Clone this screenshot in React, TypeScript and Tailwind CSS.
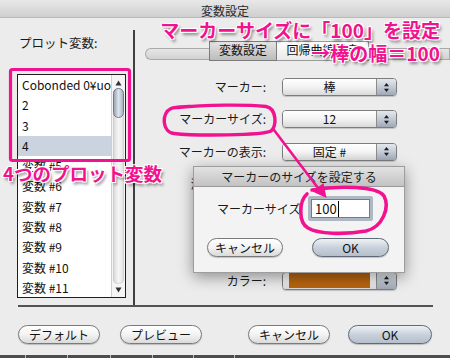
import React from 'react';

const jp = "font-['Noto_Sans_CJK_JP','Noto_Sans',sans-serif]";

const plotVars = [
  'Cobonded 0¥uo ’',
  '2',
  '3',
  '4',
  '変数 #5',
  '変数 #6',
  '変数 #7',
  '変数 #8',
  '変数 #9',
  '変数 #10',
  '変数 #11',
];

function StepArrows() {
  return (
    <svg width="7" height="11" viewBox="0 0 7 11">
      <path d="M3.5 1 L6 4.2 L1 4.2 Z" fill="#1b1b1b" />
      <path d="M3.5 10 L6 6.8 L1 6.8 Z" fill="#1b1b1b" />
    </svg>
  );
}

function Popup({ children, swatch = false }: { children?: React.ReactNode; swatch?: boolean }) {
  return (
    <div className="flex h-[18px] w-[115px] overflow-hidden rounded-[4px] border border-[#7d7d7d] shadow-[0_1px_1px_rgba(0,0,0,0.18)]">
      <div className="flex flex-1 items-center justify-center bg-linear-to-b from-white via-[#f3f3f3] to-[#d9d9d9] text-[12px] leading-none text-[#111]">
        {swatch ? <div className="mx-[6px] h-[15px] flex-1 bg-[#b7640f]" /> : children}
      </div>
      <div className="flex w-[20px] items-center justify-center border-l border-[#8b8b8b] bg-linear-to-b from-[#e3e8ee] via-[#c3cbd5] to-[#9fa9b6]">
        <StepArrows />
      </div>
    </div>
  );
}

function AquaButton({
  children,
  primary = false,
  className = '',
}: {
  children: React.ReactNode;
  primary?: boolean;
  className?: string;
}) {
  const skin = primary
    ? 'border-[#5f6a78] bg-linear-to-b from-[#eef2f6] via-[#c9d1db] to-[#b5bfcb]'
    : 'border-[#7a7a7a] bg-linear-to-b from-white via-[#f3f3f3] to-[#dadada]';
  return (
    <div
      className={`flex h-[19px] items-center justify-center rounded-full border text-[12px] leading-none text-[#111] shadow-[0_1px_1px_rgba(0,0,0,0.2)] ${skin} ${className}`}
    >
      {children}
    </div>
  );
}

export default function App() {
  return (
    <div className={`relative flex h-[358px] w-[450px] flex-col overflow-hidden bg-[#ececec] ${jp}`}>
      {/* window title */}
      <div className="flex h-[18px] shrink-0 justify-center border-b border-[#b9b9b9] bg-linear-to-b from-[#e8e8e8] to-[#cfcfcf] pt-[4px] text-[12px] leading-[14px] text-[#2a2a2a]">
        変数設定
      </div>

      {/* body */}
      <div className="flex h-[287px] shrink-0">
        {/* left: plot variables */}
        <div className="flex w-[133px] shrink-0 flex-col">
          <div className="ml-[19px] mt-[17px] text-[12.5px] leading-[16px] text-[#1a1a1a]">プロット変数:</div>
          <div className="ml-[17px] mt-[23px] flex h-[224px] w-[109px] border border-[#1e1e1e] bg-white">
            <div className="flex-1 overflow-hidden">
              {plotVars.map((v, i) => (
                <div
                  key={v}
                  className={`h-[20.3px] whitespace-nowrap pl-[4px] text-[12px] leading-[20.3px] text-[#111] ${
                    i === 3 ? 'bg-[#cbd3de]' : ''
                  }`}
                >
                  {v}
                </div>
              ))}
            </div>
            <div className="flex w-[14px] flex-col items-center border-l border-[#cfcfcf] bg-[#f5f5f5]">
              <svg width="7" height="6" viewBox="0 0 7 6" className="mt-[5px]">
                <path d="M3.5 0.5 L6.5 5.5 L0.5 5.5 Z" fill="#333" />
              </svg>
              <div className="mt-[2px] flex w-[11px] flex-1 flex-col rounded-full bg-linear-to-r from-[#d9d9d9] via-[#f6f6f6] to-[#e2e2e2] shadow-[inset_0_0_2px_rgba(0,0,0,0.25)]">
                <div className="h-[30px] rounded-full border border-[#6f7b8a] bg-linear-to-r from-[#9aa6b5] via-[#dfe5ec] to-[#a7b2c0]" />
              </div>
              <svg width="7" height="6" viewBox="0 0 7 6" className="mb-[4px] mt-[3px]">
                <path d="M3.5 5.5 L6.5 0.5 L0.5 0.5 Z" fill="#333" />
              </svg>
            </div>
          </div>
        </div>

        {/* vertical divider */}
        <div className="mt-[12px] w-[2px] shrink-0 bg-[#3f3f3f]" />

        {/* right: settings */}
        <div className="flex flex-1 flex-col">
          <div className="ml-[10px] mt-[23px] flex h-[20px] items-start">
            <div className="mt-[7px] h-[12px] w-[64px] rounded-l-[6px] border border-r-0 border-[#a9a9a9] bg-linear-to-b from-[#e6e6e6] to-[#d2d2d2]" />
            <div className="flex h-[20px] w-[68px] items-center justify-center border border-[#7b7b7b] bg-linear-to-b from-[#e4e4e4] via-[#cfcfcf] to-[#bcbcbc] pb-[3px] text-[12px] leading-none text-[#111]">
              変数設定
            </div>
            <div className="flex h-[20px] w-[92px] items-center justify-center border border-l-0 border-[#9a9a9a] bg-linear-to-b from-white to-[#e9e9e9] pb-[3px] text-[12px] leading-none text-[#111]">
              回帰曲線設定
            </div>
            <div className="mt-[7px] h-[12px] flex-1 border border-l-0 border-[#a9a9a9] bg-linear-to-b from-[#e6e6e6] to-[#d2d2d2]" />
          </div>

          <div className="mt-[17px] grid grid-cols-[131px_115px] gap-x-[16px] gap-y-[14.33px] text-[12px] leading-[18px] text-[#1a1a1a]">
            <div className="text-right">マーカー:</div>
            <Popup>棒</Popup>
            <div className="text-right">マーカーサイズ:</div>
            <Popup>12</Popup>
            <div className="text-right">マーカーの表示:</div>
            <Popup>固定 #</Popup>
            <div className="whitespace-nowrap text-right">濃淡スタイル:</div>
            <Popup>実線</Popup>
            <div className="text-right">線の幅:</div>
            <Popup>1</Popup>
            <div className="text-right">塗り:</div>
            <Popup>なし</Popup>
            <div className="text-right">カラー:</div>
            <Popup swatch />
          </div>
        </div>
      </div>

      {/* bottom divider */}
      <div className="ml-[18px] h-[2px] w-[415px] shrink-0 bg-[#525252]" />

      {/* dialog buttons */}
      <div className="mt-[18px] flex shrink-0 items-center">
        <AquaButton className="ml-[18px] w-[82px]">デフォルト</AquaButton>
        <AquaButton className="ml-[20px] w-[82px]">プレビュー</AquaButton>
        <AquaButton className="ml-[46px] w-[82px]">キャンセル</AquaButton>
        <AquaButton primary className="ml-[18px] w-[84px]">
          OK
        </AquaButton>
      </div>

      {/* desktop edge below the window */}
      <div className="mt-auto flex h-[3px] shrink-0 bg-[#4d4d4d]">
        <div className="ml-[25px] w-[1px] bg-[#bdbdbd]" />
        <div className="ml-[41px] w-[1px] bg-[#bdbdbd]" />
        <div className="ml-[42px] w-[1px] bg-[#bdbdbd]" />
        <div className="ml-[41px] w-[1px] bg-[#bdbdbd]" />
        <div className="ml-[40px] w-[1px] bg-[#bdbdbd]" />
        <div className="ml-[40px] w-[1px] bg-[#bdbdbd]" />
      </div>

      {/* sheet: marker size */}
      <div className="absolute left-[193px] top-[166px] flex h-[107px] w-[212px] flex-col border border-[#9d9d9d] bg-[#f3f3f3] shadow-[0_4px_14px_rgba(0,0,0,0.4)]">
        <div className="flex h-[20px] shrink-0 items-center justify-center border-b border-[#9a9a9a] bg-linear-to-b from-[#e2e2e2] to-[#c3c3c3] text-[12px] leading-none text-[#1d1d1d]">
          マーカーのサイズを設定する
        </div>
        <div className="ml-[23px] mt-[9px] flex items-center">
          <div className="w-[91px] text-[12px] leading-none text-[#1a1a1a]">マーカーサイズ</div>
          <div className="flex h-[25px] w-[65px] items-center rounded-[2px] border-[3px] border-[#aeb8c5] bg-white shadow-[inset_0_0_0_1px_#7a7a7a] pl-[4px] text-[13px] leading-none text-[#111]">
            100
            <span className="ml-[1px] h-[16px] w-[1px] bg-black" />
          </div>
        </div>
        <div className="mt-[17px] flex items-center">
          <AquaButton className="ml-[13px] w-[76px]">キャンセル</AquaButton>
          <AquaButton primary className="ml-[29px] w-[77px]">
            OK
          </AquaButton>
        </div>
      </div>

      {/* hand-drawn annotations */}
      <svg className="pointer-events-none absolute left-0 top-0" width="450" height="358" viewBox="0 0 450 358">
        <rect x="10.5" y="69.5" width="119" height="91" rx="2" fill="none" stroke="#f2128f" strokeWidth="3.2" />
        <path
          d="M178 107.5 C205 104.5 248 104.5 266 106.5 C277 108.5 277 127 271 131 C262 135.5 196 136 174 133.5 C162 132 161 113 171 108.5 C175 107 182 107 190 106.5"
          fill="none"
          stroke="#f2128f"
          strokeWidth="3.4"
          strokeLinecap="round"
        />
        <path d="M274 130 L318 188" stroke="#f2128f" strokeWidth="2.6" strokeLinecap="round" />
        <path d="M326.5 198 L312.5 191.5 L323.5 183 Z" fill="#f2128f" />
        <path
          d="M312 190 C338 185.5 377 186 384 196 C390 207 383 227 366 231 C344 235 318 234 308 228 C298 222 299 201 307 194"
          fill="none"
          stroke="#f2128f"
          strokeWidth="3.6"
          strokeLinecap="round"
        />
      </svg>

      <div className="pointer-events-none absolute right-[10px] top-[18px] text-right text-[19px] font-bold leading-[23px] text-[#f2128f] [text-shadow:1px_1px_0_#fff,-1px_-1px_0_#fff,1px_-1px_0_#fff,-1px_1px_0_#fff,2px_3px_3px_rgba(0,0,0,0.45)]">
        <div>マーカーサイズに「100」を設定</div>
        <div>→棒の幅＝100</div>
      </div>

      <div className="pointer-events-none absolute left-[3px] top-[162px] text-[18.5px] font-bold leading-[23px] text-[#f2128f] [text-shadow:1px_1px_0_#fff,-1px_-1px_0_#fff,1px_-1px_0_#fff,-1px_1px_0_#fff,2px_3px_3px_rgba(0,0,0,0.45)]">
        4つのプロット変数
      </div>
    </div>
  );
}
